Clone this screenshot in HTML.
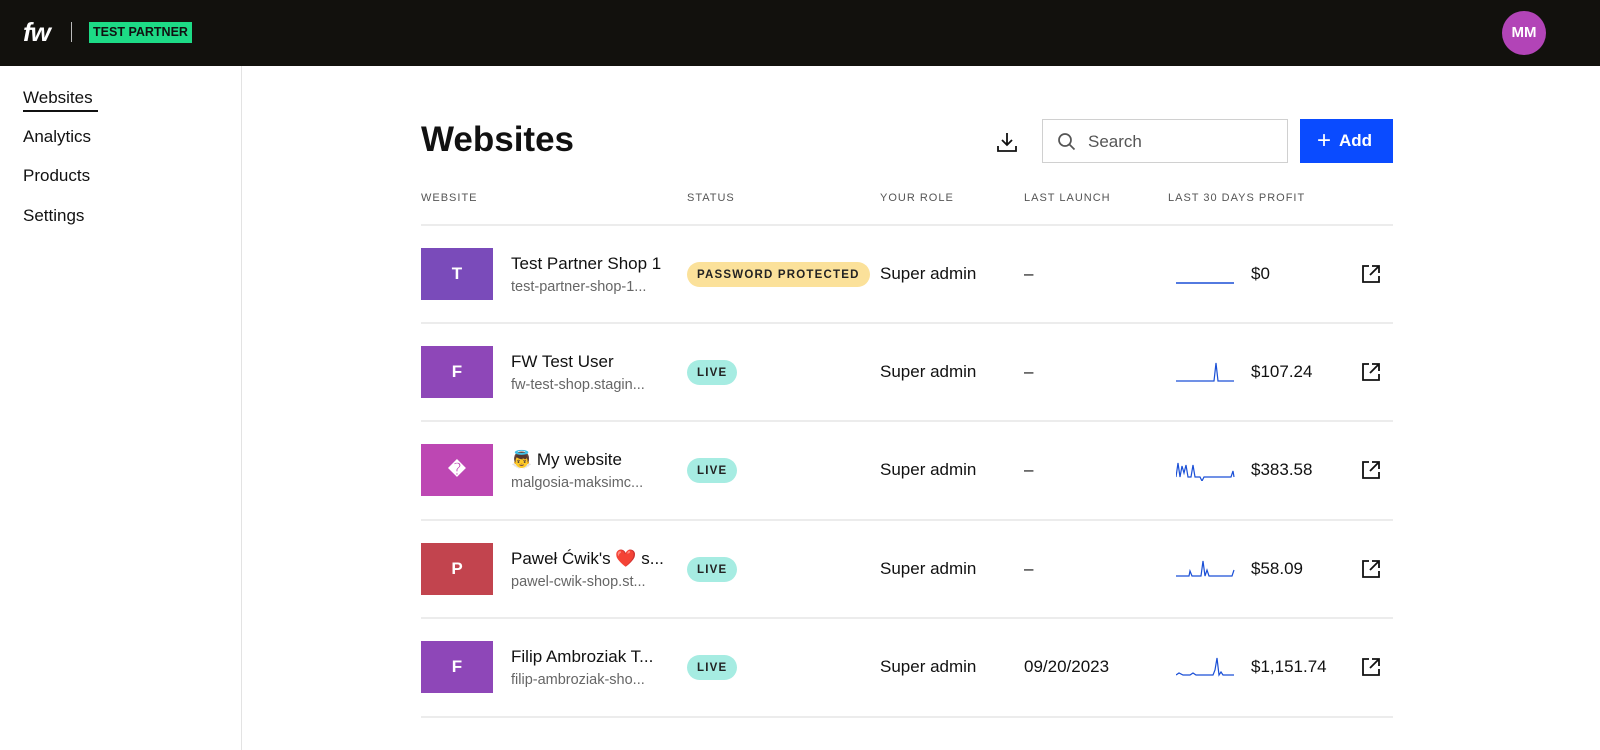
<!DOCTYPE html>
<html><head><meta charset="utf-8"><style>
*{margin:0;padding:0;box-sizing:border-box}
body{width:1600px;height:750px;overflow:hidden;background:#fff;font-family:"Liberation Sans","Noto Sans CJK JP",sans-serif;color:#111;position:relative}
.hdr{position:absolute;left:0;top:0;width:1600px;height:66px;background:#12110d}
.logo{position:absolute;left:23px;top:17px;color:#fff;font-weight:bold;font-style:italic;font-size:26px;letter-spacing:-1px}
.sep{position:absolute;left:71px;top:22px;width:1px;height:20px;background:#bbb}
.tp{position:absolute;left:89px;top:22px;height:21px;width:103px;background:#1ddb86;color:#111;font-weight:bold;font-size:12.5px;line-height:21px;text-align:center}
.av{position:absolute;left:1502px;top:11px;width:44px;height:44px;border-radius:50%;background:#b244b7;color:#fff;font-weight:bold;font-size:15px;line-height:44px;text-align:center}
.side{position:absolute;left:0;top:66px;width:242px;height:684px;border-right:1px solid #e3e3e3}
.side div{position:absolute;left:23px;font-size:17px}
.title{position:absolute;left:421px;top:120px;font-size:35px;font-weight:bold}
.search{position:absolute;left:1042px;top:119px;width:246px;height:44px;border:1.5px solid #d0d0d0}
.search span{position:absolute;left:45px;top:12px;font-size:17px;color:#555}
.add{position:absolute;left:1300px;top:119px;width:93px;height:44px;background:#0a4bff;color:#fff;font-weight:bold;font-size:17px;line-height:44px;padding-left:17px}
.th{position:absolute;top:192px;font-size:11px;letter-spacing:1px;color:#555}
.line{position:absolute;left:421px;width:972px;height:2px;background:#ececec}
.row{position:absolute;left:0;width:1600px;height:98px}
.thumb{position:absolute;left:421px;top:23px;width:72px;height:52px;color:#fff;font-weight:bold;font-size:17px;line-height:52px;text-align:center}
.nm{position:absolute;left:511px;top:29px;font-size:17px;white-space:nowrap}
.url{position:absolute;left:511px;top:54px;font-size:14.5px;color:#666;white-space:nowrap}
.pill{position:absolute;left:687px;top:37px;height:25px;display:flex;align-items:center;border-radius:13px;font-size:11.5px;font-weight:bold;letter-spacing:1.2px;padding:1px 10px 0;color:#222}
.live{background:#a6ece2}
.pw{background:#fbe19a}
.role{position:absolute;left:880px;top:39px;font-size:17px}
.launch{position:absolute;left:1024px;top:39px;font-size:17px}
.sp{position:absolute;left:1176px;top:36px}
.val{position:absolute;left:1251px;top:39px;font-size:17px}
.ext{position:absolute;left:1361px;top:39px}
</style></head><body>
<div class="hdr"><div class="logo">fw</div><div class="sep"></div><div class="tp">TEST PARTNER</div><div class="av">MM</div></div>
<div class="side">
<div style="top:22px">Websites</div><div style="left:23px;top:44px;width:75px;height:2px;background:#111"></div>
<div style="top:61px">Analytics</div><div style="top:100px">Products</div><div style="top:140px">Settings</div>
</div>
<div class="title">Websites</div>
<svg style="position:absolute;left:996px;top:131px" width="22" height="22" viewBox="0 0 22 22" fill="none" stroke="#111" stroke-width="1.8"><path d="M11 2v12M6 9l5 5 5-5M2 15v5h18v-5"/></svg>
<div class="search"><svg style="position:absolute;left:14px;top:12px" width="20" height="20" viewBox="0 0 20 20" fill="none" stroke="#555" stroke-width="1.7"><circle cx="8" cy="8" r="6"/><path d="M12.5 12.5l5 5"/></svg><span>Search</span></div>
<div class="add"><span style="font-weight:normal;font-size:24px;vertical-align:-2px;margin-right:8px">+</span>Add</div>
<div class="th" style="left:421px">WEBSITE</div><div class="th" style="left:687px">STATUS</div><div class="th" style="left:880px">YOUR ROLE</div><div class="th" style="left:1024px">LAST LAUNCH</div><div class="th" style="left:1168px">LAST 30 DAYS PROFIT</div>
<div class="line" style="top:224px"></div><div class="line" style="top:322px"></div><div class="line" style="top:420px"></div><div class="line" style="top:519px"></div><div class="line" style="top:617px"></div><div class="line" style="top:716px"></div>

<div class="row" style="top:225px"><div class="thumb" style="background:#7a4bba">T</div><div class="nm">Test Partner Shop 1</div><div class="url">test-partner-shop-1...</div><div class="pill pw">PASSWORD PROTECTED</div><div class="role">Super admin</div><div class="launch">–</div>
<svg class="sp" width="60" height="24"><path d="M0 22H58" stroke="#1a4fd6" stroke-width="1.5" fill="none"/></svg><div class="val">$0</div>
<svg class="ext" width="20" height="20" viewBox="0 0 20 20" fill="none" stroke="#111" stroke-width="1.8"><path d="M8 2H2v16h16v-6M11 2h7v7M18 2L9 11"/></svg></div>

<div class="row" style="top:323px"><div class="thumb" style="background:#8e47b8">F</div><div class="nm">FW Test User</div><div class="url">fw-test-shop.stagin...</div><div class="pill live">LIVE</div><div class="role">Super admin</div><div class="launch">–</div>
<svg class="sp" width="60" height="24"><path d="M0 22H38L40 4L42 22H58" stroke="#1a4fd6" stroke-width="1.2" fill="none"/></svg><div class="val">$107.24</div>
<svg class="ext" width="20" height="20" viewBox="0 0 20 20" fill="none" stroke="#111" stroke-width="1.8"><path d="M8 2H2v16h16v-6M11 2h7v7M18 2L9 11"/></svg></div>

<div class="row" style="top:421px"><div class="thumb" style="background:#bd47b3">�</div><div class="nm">👼 My website</div><div class="url">malgosia-maksimc...</div><div class="pill live">LIVE</div><div class="role">Super admin</div><div class="launch">–</div>
<svg class="sp" width="60" height="24"><path d="M0 20L2 6L4 20L6 9L8 16L10 8L12 20L15 20L17 8L19 20L24 20L26 24L28 20L55 20L57 14L58 20" stroke="#1a4fd6" stroke-width="1.2" fill="none"/></svg><div class="val">$383.58</div>
<svg class="ext" width="20" height="20" viewBox="0 0 20 20" fill="none" stroke="#111" stroke-width="1.8"><path d="M8 2H2v16h16v-6M11 2h7v7M18 2L9 11"/></svg></div>

<div class="row" style="top:520px"><div class="thumb" style="background:#c2444e">P</div><div class="nm">Paweł Ćwik's ❤️ s...</div><div class="url">pawel-cwik-shop.st...</div><div class="pill live">LIVE</div><div class="role">Super admin</div><div class="launch">–</div>
<svg class="sp" width="60" height="24"><path d="M0 20H13L14 15L16 20H25L27 5L29 20L31 14L33 20H56L58 14" stroke="#1a4fd6" stroke-width="1.2" fill="none"/></svg><div class="val">$58.09</div>
<svg class="ext" width="20" height="20" viewBox="0 0 20 20" fill="none" stroke="#111" stroke-width="1.8"><path d="M8 2H2v16h16v-6M11 2h7v7M18 2L9 11"/></svg></div>

<div class="row" style="top:618px"><div class="thumb" style="background:#8e47b8">F</div><div class="nm">Filip Ambroziak T...</div><div class="url">filip-ambroziak-sho...</div><div class="pill live">LIVE</div><div class="role">Super admin</div><div class="launch">09/20/2023</div>
<svg class="sp" width="60" height="24"><path d="M0 21L3 19L7 21L14 21L17 19L20 21H37L39 16L41 4L43 21L45 18L47 21H58" stroke="#1a4fd6" stroke-width="1.2" fill="none"/></svg><div class="val">$1,151.74</div>
<svg class="ext" width="20" height="20" viewBox="0 0 20 20" fill="none" stroke="#111" stroke-width="1.8"><path d="M8 2H2v16h16v-6M11 2h7v7M18 2L9 11"/></svg></div>
</body></html>
